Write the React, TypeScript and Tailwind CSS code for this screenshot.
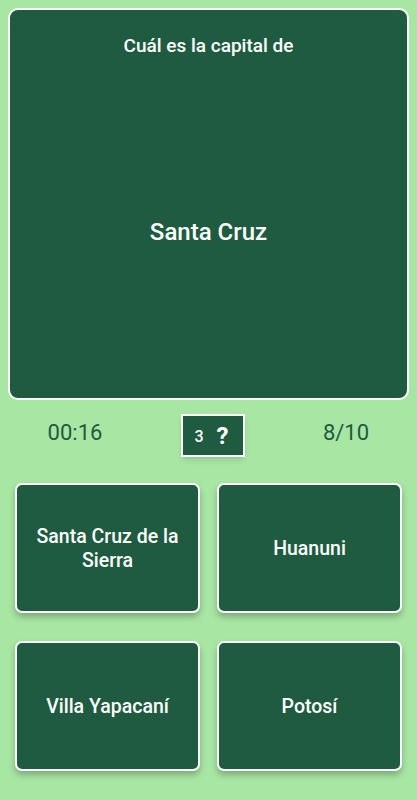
const options = ['Santa Cruz de la Sierra', 'Huanuni', 'Villa Yapacaní', 'Potosí']

export default function App() {
  return (
    <div
      className="w-[417px] h-[800px] bg-[#a8e6a4] p-2 overflow-hidden"
      style={{ fontFamily: 'Roboto, "Noto Sans", sans-serif' }}
    >
      {/* pregunta */}
      <div className="h-[392px] rounded-[10px] border-2 border-white bg-[#1e5b40] flex flex-col items-center text-white">
        <p className="pt-[24px] text-[19px] leading-[24px] font-medium">Cuál es la capital de</p>
        <div className="flex-1 flex items-center pt-[8px]">
          <p className="text-[24px] leading-[30px] font-medium">Santa Cruz</p>
        </div>
      </div>

      {/* estado */}
      <div className="mt-[14px] h-[43px] grid grid-cols-[134px_1fr_134px] items-center text-[#1e5b40]">
        <span className="text-center text-[22px] pb-[6px]">00:16</span>
        <div className="flex justify-center pl-[9px]">
          <div className="w-[64px] h-[43px] border-2 border-white bg-[#1e5b40] flex items-center justify-center gap-[13px] pr-[3px] text-white shadow-md">
            <span className="text-[16px] font-medium pt-[3px]">3</span>
            <span className="text-[24px] font-bold">?</span>
          </div>
        </div>
        <span className="text-center text-[22px] pl-[8px] pb-[6px]">8/10</span>
      </div>

      {/* respuestas */}
      <div className="mt-[26px] px-[7px] grid grid-cols-2 gap-x-[17px] gap-y-[28px]">
        {options.map((o) => (
          <button
            key={o}
            className="h-[130px] rounded-[7px] border-2 border-white bg-[#1e5b40] text-white text-[19.5px] leading-[24px] font-medium px-4 pt-[2px] flex items-center justify-center text-center shadow-[0_4px_6px_rgba(0,0,0,0.25)]"
          >
            {o}
          </button>
        ))}
      </div>
    </div>
  )
}
